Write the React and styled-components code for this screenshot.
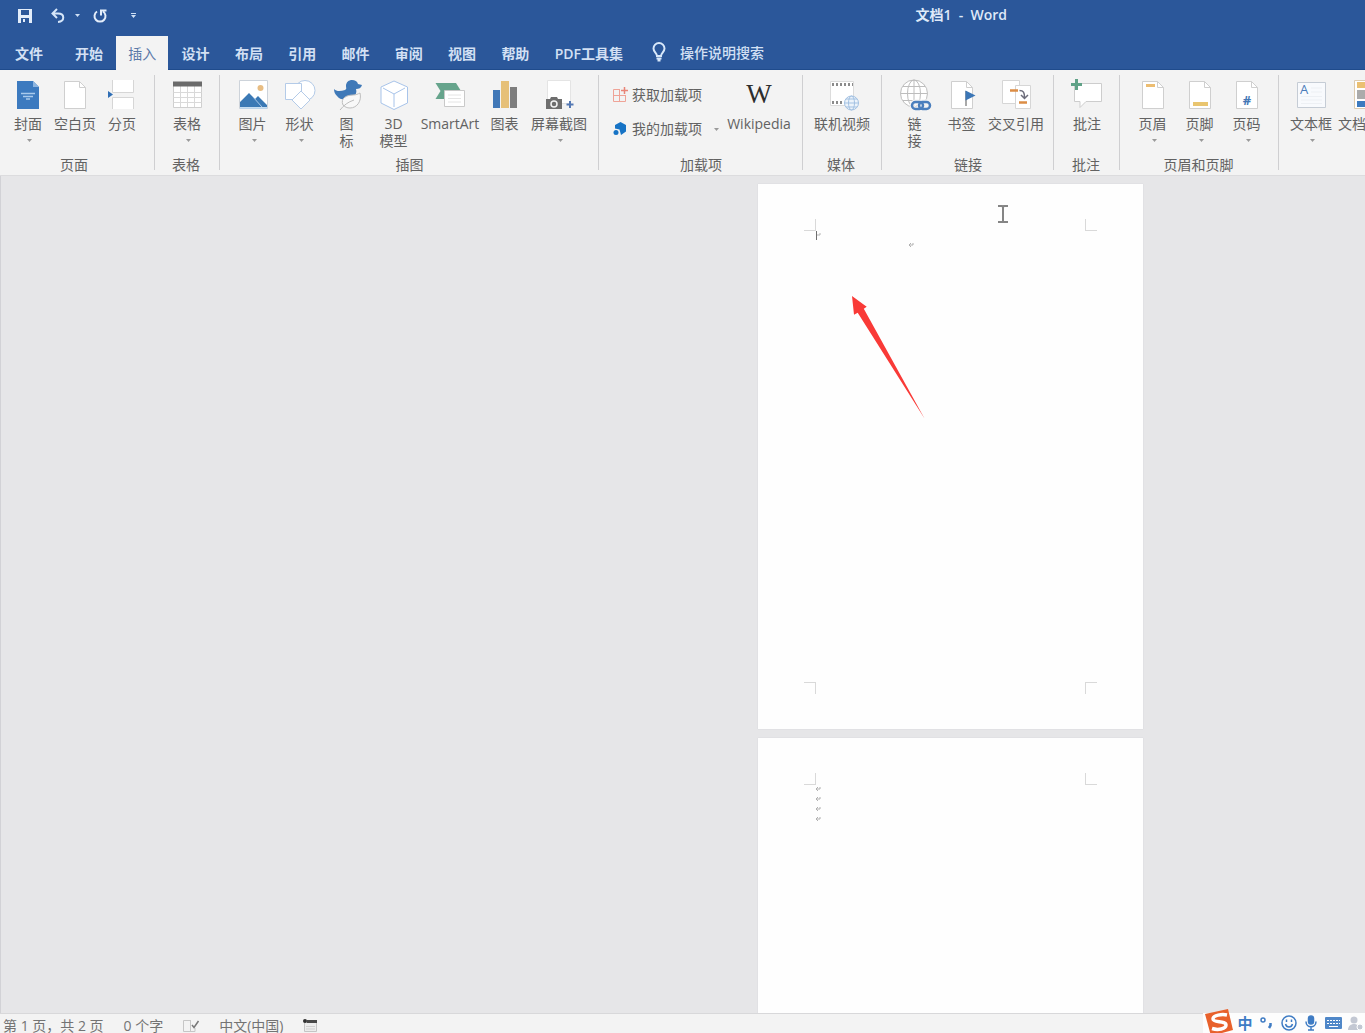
import React from "react";
import styled, { createGlobalStyle } from "styled-components";

const GlobalStyle = createGlobalStyle`
  * {
    box-sizing: border-box;
  }
  body {
    margin: 0;
    overflow: hidden;
    font-family: "Open Sans", "Noto Sans CJK SC", sans-serif;
    font-size: 14px;
    color: #626262;
  }
  button {
    border: 0;
    padding: 0;
    background: none;
    font: inherit;
    color: inherit;
    cursor: pointer;
  }
  svg {
    display: block;
    flex: none;
    overflow: visible;
  }
`;

const Window = styled.div`
  display: flex;
  flex-direction: column;
  height: 100vh;
  overflow: hidden;
`;

const TitleBar = styled.header`
  display: flex;
  align-items: center;
  height: 31px;
  background-color: #2b579a;
  color: #dfe9f8;
`;

const QuickAccess = styled.div`
  display: flex;
  align-items: center;
  padding-left: 17px;
`;

const QuickButton = styled.button`
  display: flex;
  align-items: center;
  justify-content: center;
  width: ${(props) => props.$width || 16}px;
  height: 20px;
  margin-right: ${(props) => props.$after || 0}px;
`;

const Title = styled.h1`
  margin: 0 358px 0 auto;
  padding-bottom: 2px;
  font-size: 14px;
  line-height: 20px;
  font-weight: 600;
  white-space: pre;
`;

const TabBar = styled.nav`
  display: flex;
  height: 39px;
  padding-top: 5px;
  background-color: #2b579a;
  border-bottom: 1px solid #1f4b8c;
  color: #d3e0f4;
  font-weight: 600;
`;

const Tabs = styled.div`
  display: flex;
  justify-content: space-between;
  flex: 0 0 572px;
`;

const Tab = styled.button`
  height: 34px;
  padding: 0 12px;
  line-height: 33px;
  white-space: nowrap;
  background-color: ${(props) => (props.$active ? "#f3f3f3" : "transparent")};
  color: ${(props) => (props.$active ? "#5b79a8" : "inherit")};
  font-weight: ${(props) => (props.$active ? 400 : 600)};
`;

const FileTab = styled(Tab)`
  padding: 0 20px 0 15px;
`;

const TellMe = styled.button`
  display: flex;
  align-items: center;
  gap: 13px;
  height: 32px;
  margin-left: 16px;
  font-weight: 500;
`;

const Ribbon = styled.section`
  display: flex;
  flex: none;
  height: 106px;
  overflow: hidden;
  background-color: #f3f3f3;
  border-bottom: 1px solid #dcdcde;
`;

const Group = styled.div`
  display: flex;
  flex-direction: column;
  flex: none;
  padding: 9px ${(props) => props.$right}px 0 ${(props) => props.$left}px;
`;

const Divider = styled.div`
  flex: none;
  width: 1px;
  margin: 5px 0;
  background-color: #cfcfd1;
`;

const GroupBody = styled.div`
  display: flex;
  height: 77px;
`;

const GroupName = styled.div`
  padding-right: 2px;
  line-height: 18px;
  text-align: center;
`;

const BigButton = styled.button`
  display: flex;
  flex-direction: column;
  align-items: center;
  flex: none;
  width: ${(props) => props.$width}px;
  line-height: 17px;
  white-space: nowrap;
`;

const IconBox = styled.span`
  display: block;
  width: 32px;
  height: 32px;
  margin-bottom: 4px;
`;

const Line = styled.span`
  display: block;
  height: 17px;
`;

const CaretLine = styled.span`
  display: flex;
  align-items: center;
  height: 17px;
  padding-left: 3px;
`;

const WikiMark = styled.span`
  display: block;
  font-family: "Liberation Serif", serif;
  font-size: 27px;
  line-height: 31px;
  text-align: center;
  color: #2d2d2d;
`;

const SmallColumn = styled.div`
  display: flex;
  flex-direction: column;
  gap: 14px;
  width: 114px;
  padding-top: 6px;
`;

const SmallButton = styled.button`
  display: flex;
  align-items: center;
  gap: 4px;
  height: 20px;
  line-height: 20px;
  white-space: nowrap;
`;

const SmallCaret = styled.span`
  margin-left: 8px;
`;

const Canvas = styled.main`
  display: flex;
  flex-direction: column;
  align-items: flex-end;
  gap: 9px;
  flex: 1;
  min-height: 0;
  overflow: hidden;
  padding: 8px 222px 0 0;
  background-color: #e6e6e8;
  border-left: 1px solid #d2d2d6;
`;

const Page = styled.article`
  position: relative;
  display: flex;
  flex-direction: column;
  justify-content: space-between;
  flex: none;
  width: 385px;
  height: 545px;
  padding: 35px 46px;
  background-color: #fefefe;
  box-shadow: 0 0 1px #c8c8cc;
`;

const CornerRow = styled.div`
  display: flex;
  justify-content: space-between;
`;

const Corner = styled.span`
  width: 12px;
  height: 12px;
  border: 0 solid #d9d9d9;
  border-${(props) => props.$v}-width: 1px;
  border-${(props) => props.$h}-width: 1px;
`;

const Floating = styled.div`
  position: absolute;
  left: ${(props) => props.$x}px;
  top: ${(props) => props.$y}px;
`;

const MarkList = styled(Floating)`
  display: flex;
  flex-direction: column;
  gap: 4px;
`;

const StatusBar = styled.footer`
  position: relative;
  display: flex;
  align-items: center;
  flex: none;
  height: 20px;
  padding: 4px 0 0 3px;
  line-height: 16px;
  white-space: pre;
  background-color: #f3f3f3;
  border-top: 1px solid #d8d8da;
  color: #737373;
`;

const StatusItem = styled.span`
  margin-right: 20px;
`;

const InputBar = styled.div`
  position: absolute;
  right: 0;
  bottom: 0;
  display: flex;
  align-items: center;
  width: 162px;
  height: 20px;
  background-color: #fdfdfd;
`;

const InputButton = styled.button`
  display: flex;
  align-items: center;
  justify-content: center;
  flex: none;
  width: 22px;
  height: 20px;
  font-size: 15px;
  font-weight: 700;
  line-height: 18px;
  color: #3f7cc4;
`;

const LogoButton = styled(InputButton)`
  width: 31px;
`;

const Caret = ({ color = "#9a9a9a" }) => (
  <svg width="5" height="3" viewBox="0 0 5 3">
    <path d="M0 0h5L2.500 3z" fill={color} />
  </svg>
);

const Sheet = ({ children }) => (
  <>
    <path d="M5.500 2.500h15l6 6v21h-21z" fill="#fff" stroke="#cfcfcf" />
    <path d="M20.500 2.500v6h6" fill="none" stroke="#cfcfcf" />
    {children}
  </>
);

const icons = {
  cover: (
    <>
      <path d="M5 2h16l6 6v22H5z" fill="#3c7abf" />
      <path d="M21 2v6h6z" fill="#8db5e0" />
      <path d="M9 14.500h14M11 17.500h10M14 20h4" stroke="#a9caec" strokeWidth="1.500" />
    </>
  ),
  blank: <Sheet />,
  pageBreak: (
    <>
      <path d="M6.500 1v12.500h21V1M6.500 30V18.500h21V30" fill="#fff" stroke="#d6d6d6" />
      <path d="M2 12l5 3.500L2 19z" fill="#2f6eb5" />
    </>
  ),
  table: (
    <>
      <path d="M2.500 3.500h28v25h-28z" fill="#fff" stroke="#cfcfcf" />
      <path d="M2.500 13.500h28M2.500 18.500h28M2.500 23.500h28M9.500 6v22M16.500 6v22M23.500 6v22" stroke="#d9d9d9" />
      <path d="M2 2.500h29V7.500H2z" fill="#6b6b6b" />
    </>
  ),
  picture: (
    <>
      <path d="M2.500 1.500h28v28h-28z" fill="#fff" stroke="#cdd3da" />
      <circle cx="23.500" cy="9" r="3" fill="#e8bd83" />
      <path d="M3 28v-5l9-9 6 6 3-3 9 9v2z" fill="#3b79b5" />
      <path d="M16 18l9 10" stroke="#a9c8e6" />
      <path d="M3 29h27" stroke="#b4d3ee" strokeWidth="1.500" />
    </>
  ),
  shapes: (
    <g fill="#fff" stroke="#b4cbe8">
      <circle cx="21" cy="11.500" r="10" />
      <path d="M1.500 4.500h16v16h-16z" />
      <path d="M17 12l9 9-9 9-9-9z" />
    </g>
  ),
  duck: (
    <>
      <path
        d="M3 10c3 3 7 2 11 1 2-1 1-2 1-4 0-4 3-6 6-6 3 0 5 1 6 4l4 1c-1 3-3 4-6 4 1 3 0 6-3 8-4 3-13 4-16-1-2-2-3-4-3-7z"
        fill="#3f79b8"
      />
      <path
        d="M12 26c-3-7 4-10 10-10 3 0 5-1 7-2 2 8-3 15-10 15-3 0-5-1-7-3z"
        fill="#f8f8f8"
        stroke="#bdbdbd"
      />
      <path d="M9 31c4-5 8-8 14-10" fill="none" stroke="#bdbdbd" />
    </>
  ),
  cube: (
    <g fill="#fff" stroke="#a8c4ea" strokeLinejoin="round">
      <path d="M16 2L29.500 8v16L16 30.500 3 24V8z" />
      <path d="M5 9l11 6 11-6M16 15v13" fill="none" />
    </g>
  ),
  smartArt: (
    <>
      <path d="M1.500 4H22l5 8-5 8H1.500l5-8z" fill="#66a48c" />
      <path d="M10.500 11.500h20v16h-20z" fill="#fff" stroke="#c9c9c9" />
      <path d="M14 16h13M14 19.500h13M14 23h13" stroke="#e4e4e4" />
    </>
  ),
  chart: (
    <>
      <path d="M4 11h7v18H4z" fill="#4178b7" />
      <path d="M12 2h8v27h-8z" fill="#e6c078" />
      <path d="M21 8h7v21h-7z" fill="#7d7d7d" />
    </>
  ),
  screenshot: (
    <>
      <path d="M4.500 1.500h23v23h-23z" fill="#fff" stroke="#e4e4e4" />
      <path d="M3 20h4l1-2h6l1 2h4v10H3z" fill="#6e6e6e" />
      <circle cx="11" cy="25" r="3" fill="none" stroke="#f3f3f3" strokeWidth="1.500" />
      <path d="M27 22v7M23.500 25.500h7" stroke="#5479b4" strokeWidth="2" />
    </>
  ),
  video: (
    <>
      <path d="M4.500 2.500h23v24h-23z" fill="#fff" stroke="#dcdcdc" />
      <path d="M6 5.500h21M6 23.500h12" stroke="#8b8b8b" strokeWidth="3" strokeDasharray="2 2" />
      <g fill="#edf4fb" stroke="#a3c1e2">
        <circle cx="25.500" cy="24" r="7" />
        <ellipse cx="25.500" cy="24" rx="3" ry="7" fill="none" />
        <path d="M18.500 24h14M20 20h11M20 28h11" />
      </g>
    </>
  ),
  link: (
    <>
      <g fill="#fff" stroke="#bdbdbd">
        <circle cx="15" cy="14.500" r="13.500" />
        <ellipse cx="15" cy="14.500" rx="6.500" ry="13.500" fill="none" />
        <path d="M1.500 14.500h27M4 7.500h22M4 21.500h22M15 1v27" />
      </g>
      <g fill="none" stroke="#f3f3f3" strokeWidth="5">
        <rect x="13" y="23" width="11" height="7" rx="3.500" />
        <rect x="20" y="23" width="11" height="7" rx="3.500" />
      </g>
      <g fill="none" stroke="#4b7fbd" strokeWidth="2.500">
        <rect x="13" y="23" width="11" height="7" rx="3.500" />
        <rect x="20" y="23" width="11" height="7" rx="3.500" />
      </g>
    </>
  ),
  bookmark: (
    <Sheet>
      <path d="M20 12v15" stroke="#8c8c8c" strokeWidth="1.500" />
      <path d="M19.500 11.500l10 5-10 5z" fill="#3b76b6" />
    </Sheet>
  ),
  crossRef: (
    <>
      <path d="M2.500 1.500h17v23h-17z" fill="#fff" stroke="#d6d6d6" />
      <path d="M15.500 6.500h15v23h-15z" fill="#fff" stroke="#d6d6d6" />
      <path d="M10 11.500h8M19 23.500h8" stroke="#dc8d45" strokeWidth="2.500" />
      <path d="M19.500 11.500c4 0 5 2 5 7M21 16l3.500 3.500L28 16" fill="none" stroke="#6d6d7b" strokeWidth="1.500" />
    </>
  ),
  comment: (
    <>
      <path d="M3.500 4.500h27v18H15l-6 6v-6H3.500z" fill="#fff" stroke="#cdcdcd" />
      <path d="M5.500 0v11M0 5.500h11" stroke="#5fa287" strokeWidth="3" />
    </>
  ),
  header: (
    <Sheet>
      <path d="M9 6.500h9" stroke="#ecbd72" strokeWidth="3" />
    </Sheet>
  ),
  footer: (
    <Sheet>
      <path d="M9 25h15" stroke="#e9c56f" strokeWidth="4" />
    </Sheet>
  ),
  pageNumber: (
    <Sheet>
      <text x="16" y="26" textAnchor="middle" fontSize="13" fontWeight="700" fill="#4477b5">
        #
      </text>
    </Sheet>
  ),
  textBox: (
    <>
      <path d="M2.500 3.500h28v25h-28z" fill="#f8fafd" stroke="#c5ccd5" />
      <path d="M16 9h11M16 13h11M6 17.500h21M6 21h21M6 24.500h21" stroke="#edf0f4" />
      <text x="5" y="15" fontSize="13" fill="#4b7cba">
        A
      </text>
    </>
  ),
  docParts: (
    <>
      <path d="M4.500 1.500h23v28h-23z" fill="#fff" stroke="#dccbb0" />
      <path d="M7 3h18v6H7z" fill="#ebc072" />
      <path d="M7 11h18v9H7z" fill="#ababab" />
      <path d="M7 22h18v6H7z" fill="#3c7abf" />
    </>
  ),
};

const RibbonIcon = ({ name }) => (
  <IconBox>
    {name === "wikipedia" ? (
      <WikiMark>W</WikiMark>
    ) : (
      <svg width="32" height="32" viewBox="0 0 32 32">
        {icons[name]}
      </svg>
    )}
  </IconBox>
);

const Command = ({ icon, lines, width, menu }) => (
  <BigButton $width={width}>
    <RibbonIcon name={icon} />
    {lines.map((line) => (
      <Line key={line}>{line}</Line>
    ))}
    {menu && (
      <CaretLine>
        <Caret />
      </CaretLine>
    )}
  </BigButton>
);

const AddIns = () => (
  <SmallColumn>
    <SmallButton>
      <svg width="16" height="16" viewBox="0 0 16 16" fill="none" stroke="#efa397">
        <path d="M8 2.500H1.500v12h12V8M1.500 8.500h12M7.500 2.500v12" />
        <path d="M12.500 0v7M9 3.500h7" stroke="#e98577" strokeWidth="1.500" />
      </svg>
      获取加载项
    </SmallButton>
    <SmallButton>
      <svg width="16" height="16" viewBox="0 0 16 16" fill="#1673c5">
        <path d="M8.500 1L14 4v6.500L9 14 7.500 8.500 3 7.500V4z" />
        <circle cx="4" cy="11.500" r="2.500" />
      </svg>
      我的加载项
      <SmallCaret>
        <Caret />
      </SmallCaret>
    </SmallButton>
  </SmallColumn>
);

const groups = [
  {
    name: "页面",
    left: 8,
    right: 12,
    items: [
      { icon: "cover", lines: ["封面"], width: 40, menu: true },
      { icon: "blank", lines: ["空白页"], width: 54 },
      { icon: "pageBreak", lines: ["分页"], width: 40 },
    ],
  },
  {
    name: "表格",
    left: 12,
    right: 12,
    items: [{ icon: "table", lines: ["表格"], width: 40, menu: true }],
  },
  {
    name: "插图",
    left: 9,
    right: 6,
    items: [
      { icon: "picture", lines: ["图片"], width: 47, menu: true },
      { icon: "shapes", lines: ["形状"], width: 47, menu: true },
      { icon: "duck", lines: ["图", "标"], width: 47 },
      { icon: "cube", lines: ["3D", "模型"], width: 47 },
      { icon: "smartArt", lines: ["SmartArt"], width: 66 },
      { icon: "chart", lines: ["图表"], width: 43 },
      { icon: "screenshot", lines: ["屏幕截图"], width: 66, menu: true },
    ],
  },
  {
    name: "加载项",
    left: 13,
    right: 10,
    addIns: true,
    items: [{ icon: "wikipedia", lines: ["Wikipedia"], width: 66 }],
  },
  {
    name: "媒体",
    left: 6,
    right: 6,
    items: [{ icon: "video", lines: ["联机视频"], width: 66 }],
  },
  {
    name: "链接",
    left: 9,
    right: 6,
    items: [
      { icon: "link", lines: ["链", "接"], width: 47 },
      { icon: "bookmark", lines: ["书签"], width: 47 },
      { icon: "crossRef", lines: ["交叉引用"], width: 62 },
    ],
  },
  {
    name: "批注",
    left: 13,
    right: 12,
    items: [{ icon: "comment", lines: ["批注"], width: 40 }],
  },
  {
    name: "页眉和页脚",
    left: 9,
    right: 8,
    items: [
      { icon: "header", lines: ["页眉"], width: 47, menu: true },
      { icon: "footer", lines: ["页脚"], width: 47, menu: true },
      { icon: "pageNumber", lines: ["页码"], width: 47, menu: true },
    ],
  },
  {
    left: 8,
    right: 9,
    items: [
      { icon: "textBox", lines: ["文本框"], width: 48, menu: true },
      { icon: "docParts", lines: ["文档部件"], width: 62 },
    ],
  },
];

const tabs = ["开始", "插入", "设计", "布局", "引用", "邮件", "审阅", "视图", "帮助", "PDF工具集"];

const ParagraphMark = () => (
  <svg width="6" height="6" viewBox="0 0 6 6" fill="none" stroke="#b0b0b0">
    <path d="M5 1v2H1M3 1L1 3l2 2" />
  </svg>
);

const Corners = ({ edge }) => (
  <CornerRow>
    <Corner $v={edge} $h="right" />
    <Corner $v={edge} $h="left" />
  </CornerRow>
);

function App() {
  return (
    <Window>
      <GlobalStyle />
      <TitleBar>
        <QuickAccess>
          <QuickButton aria-label="保存" $after={17}>
            <svg width="14" height="14" viewBox="0 0 14 14">
              <path d="M0 0h14v14H0z" fill="#e3edfa" />
              <path d="M3 1h8v5H3zM3 9h8v5H3z" fill="#2b579a" />
              <path d="M5 10h2v3H5z" fill="#e3edfa" />
            </svg>
          </QuickButton>
          <QuickButton aria-label="撤消" $after={6}>
            <svg width="14" height="14" viewBox="0 0 14 14" fill="none" stroke="#d6e6f9" strokeWidth="2">
              <path d="M6 0L1.500 4.500 6 9M2 4.500h5c7 0 7 8 0 8.500" />
            </svg>
          </QuickButton>
          <QuickButton aria-label="撤消选项" $width={11} $after={9}>
            <Caret color="#cfe0f5" />
          </QuickButton>
          <QuickButton aria-label="重复" $after={17}>
            <svg width="14" height="14" viewBox="0 0 14 14" fill="none" stroke="#e3edfa" strokeWidth="2">
              <path d="M4 2.500a5.500 5.500 0 1 0 6 0M8 6.500V1.500h5.500" />
            </svg>
          </QuickButton>
          <QuickButton aria-label="自定义快速访问工具栏">
            <svg width="5" height="5" viewBox="0 0 5 5" fill="#cfe0f5">
              <path d="M0 0h5v1H0zM0 2h5L2.500 5z" />
            </svg>
          </QuickButton>
        </QuickAccess>
        <Title>{"文档1  -  Word"}</Title>
      </TitleBar>
      <TabBar>
        <FileTab>文件</FileTab>
        <Tabs>
          {tabs.map((tab) => (
            <Tab key={tab} $active={tab === "插入"}>
              {tab}
            </Tab>
          ))}
        </Tabs>
        <TellMe>
          <svg width="16" height="20" viewBox="0 0 16 20" fill="none" stroke="#d8e8fa" strokeWidth="2">
            <path d="M6 14c0-3-3.500-4-3.500-7.500a5.500 5.500 0 0 1 11 0c0 3.500-3.500 4.500-3.500 7.500z" />
            <path d="M5.500 16.500h5M6.500 18.500h3" />
          </svg>
          操作说明搜索
        </TellMe>
      </TabBar>
      <Ribbon>
        {groups.map((group) => (
          <React.Fragment key={group.items[0].icon}>
            <Group $left={group.left} $right={group.right}>
              <GroupBody>
                {group.addIns && <AddIns />}
                {group.items.map((item) => (
                  <Command key={item.icon} {...item} />
                ))}
              </GroupBody>
              {group.name && <GroupName>{group.name}</GroupName>}
            </Group>
            {group.name && <Divider />}
          </React.Fragment>
        ))}
      </Ribbon>
      <Canvas>
        <Page>
          <Corners edge="bottom" />
          <Corners edge="top" />
          <Floating $x={58} $y={47}>
            <svg width="6" height="10" viewBox="0 0 6 10" fill="none">
              <path d="M.5 0v9" stroke="#6f6f6f" />
              <path d="M1 4h3V2" stroke="#b5b5b5" />
            </svg>
          </Floating>
          <Floating $x={150} $y={58}>
            <ParagraphMark />
          </Floating>
          <Floating $x={240} $y={21}>
            <svg width="10" height="18" viewBox="0 0 10 18" fill="none" stroke="#858585" strokeWidth="2">
              <path d="M0 1h4l1 1 1-1h4M0 17h4l1-1 1 1h4M5 2v14" />
            </svg>
          </Floating>
          <Floating $x={94} $y={112}>
            <svg width="73" height="123" viewBox="0 0 73 123">
              <path d="M0 0l14.700 10.700-2.900 2L72.500 122.500 5.700 16.700 2 18.700z" fill="#f93a37" />
            </svg>
          </Floating>
        </Page>
        <Page>
          <Corners edge="bottom" />
          <Corners edge="top" />
          <MarkList $x={57} $y={48}>
            <ParagraphMark />
            <ParagraphMark />
            <ParagraphMark />
            <ParagraphMark />
          </MarkList>
        </Page>
      </Canvas>
      <StatusBar>
        <StatusItem>第 1 页，共 2 页</StatusItem>
        <StatusItem>0 个字</StatusItem>
        <StatusItem>
          <svg width="16" height="12" viewBox="0 0 16 12" fill="none" stroke="#c6c6c6">
            <path d="M12 8v3.500H.5V.5H8M7.500 1v10" />
            <path d="M9 5l2 2.500L15.500 1" stroke="#777" strokeWidth="1.500" />
          </svg>
        </StatusItem>
        <StatusItem>中文(中国)</StatusItem>
        <StatusItem>
          <svg width="14" height="13" viewBox="0 0 14 13">
            <path d="M1.500 3.500h12v9h-12z" fill="#ececec" stroke="#c5c5c5" />
            <path d="M4 1h10v3H4z" fill="#484848" />
            <circle cx="2" cy="2" r="2" fill="#303030" />
            <path d="M3 7.500h9M3 10h9" stroke="#cfcfcf" />
          </svg>
        </StatusItem>
        <InputBar>
          <LogoButton aria-label="输入法">
            <svg width="28" height="26" viewBox="0 0 28 26">
              <path d="M0 4L23-1l5 21-22 6z" fill="#e8612c" />
              <path
                d="M22 5c-5-1-14 0-14 4 0 4 13 1.500 13 6 0 4-8 5.500-14 3.500"
                fill="none"
                stroke="#fff"
                strokeWidth="3.500"
              />
            </svg>
          </LogoButton>
          <InputButton>中</InputButton>
          <InputButton aria-label="标点">
            <svg width="14" height="12" viewBox="0 0 14 12" fill="none" stroke="#3f7cc4">
              <circle cx="3" cy="3" r="2" strokeWidth="1.500" />
              <path d="M10.500 6v2.500L9 11" strokeWidth="2.500" />
            </svg>
          </InputButton>
          <InputButton aria-label="表情">
            <svg width="16" height="16" viewBox="0 0 16 16" fill="none" stroke="#3f7cc4" strokeWidth="1.500">
              <circle cx="8" cy="8" r="7" />
              <path d="M5.500 4.500v2.500M10.500 4.500v2.500M4.500 9c1 4 6 4 7 0" />
            </svg>
          </InputButton>
          <InputButton aria-label="语音">
            <svg width="12" height="16" viewBox="0 0 12 16" fill="none" stroke="#3f7cc4" strokeWidth="1.500">
              <rect x="3.500" y="1" width="5" height="8" rx="2.500" fill="#3f7cc4" />
              <path d="M1 6.500c0 7 10 7 10 0M6 12v3M3 15h6" />
            </svg>
          </InputButton>
          <InputButton aria-label="键盘">
            <svg width="17" height="12" viewBox="0 0 17 12">
              <rect width="17" height="12" rx="1" fill="#4f87c8" />
              <path d="M2 3.500h13M2 6.500h13" stroke="#fff" strokeDasharray="2 1" />
              <path d="M4 9.500h9" stroke="#fff" />
            </svg>
          </InputButton>
          <InputButton aria-label="用户">
            <svg width="15" height="15" viewBox="0 0 15 15" fill="#c3c8d3">
              <circle cx="6" cy="4" r="3.500" />
              <path d="M0 14c0-8 12-8 12 0z" />
              <circle cx="12" cy="11" r="3" stroke="#fff" />
            </svg>
          </InputButton>
        </InputBar>
      </StatusBar>
    </Window>
  );
}

export default App;
